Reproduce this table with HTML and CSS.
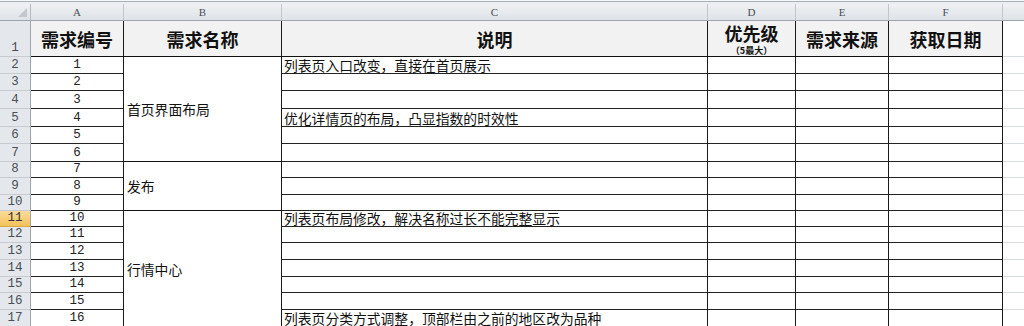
FILE: index.html
```html
<!DOCTYPE html>
<html lang="zh-CN">
<head>
<meta charset="utf-8">
<title>需求表</title>
<link rel="stylesheet" href="styles.css">
</head>
<body>
<div class="topbar"></div>
<div class="sheet">
  <div class="corner"><span class="tri"></span></div>
  <div class="ch">A</div>
  <div class="ch">B</div>
  <div class="ch">C</div>
  <div class="ch">D</div>
  <div class="ch">E</div>
  <div class="ch">F</div>
  <div class="ch last"></div>

  <div class="rh">1</div>
  <div class="t">需求编号</div>
  <div class="t">需求名称</div>
  <div class="t">说明</div>
  <div class="t two"><span class="big">优先级</span><span class="small">（5最大）</span></div>
  <div class="t">需求来源</div>
  <div class="t">获取日期</div>
  <div class="g"></div>

  <div class="rh">2</div><div class="n">1</div>
  <div class="m span6">首页界面布局</div>
  <div class="c">列表页入口改变，直接在首页展示</div><div class="e"></div><div class="e"></div><div class="e"></div><div class="g"></div>

  <div class="rh">3</div><div class="n">2</div>
  <div class="c"></div><div class="e"></div><div class="e"></div><div class="e"></div><div class="g"></div>

  <div class="rh">4</div><div class="n">3</div>
  <div class="c"></div><div class="e"></div><div class="e"></div><div class="e"></div><div class="g"></div>

  <div class="rh">5</div><div class="n">4</div>
  <div class="c">优化详情页的布局，凸显指数的时效性</div><div class="e"></div><div class="e"></div><div class="e"></div><div class="g"></div>

  <div class="rh">6</div><div class="n">5</div>
  <div class="c"></div><div class="e"></div><div class="e"></div><div class="e"></div><div class="g"></div>

  <div class="rh">7</div><div class="n">6</div>
  <div class="c"></div><div class="e"></div><div class="e"></div><div class="e"></div><div class="g"></div>

  <div class="rh">8</div><div class="n">7</div>
  <div class="m span3">发布</div>
  <div class="c"></div><div class="e"></div><div class="e"></div><div class="e"></div><div class="g"></div>

  <div class="rh">9</div><div class="n">8</div>
  <div class="c"></div><div class="e"></div><div class="e"></div><div class="e"></div><div class="g"></div>

  <div class="rh">10</div><div class="n">9</div>
  <div class="c"></div><div class="e"></div><div class="e"></div><div class="e"></div><div class="g"></div>

  <div class="rh sel">11</div><div class="n">10</div>
  <div class="m span7">行情中心</div>
  <div class="c">列表页布局修改，解决名称过长不能完整显示</div><div class="e"></div><div class="e"></div><div class="e"></div><div class="g"></div>

  <div class="rh">12</div><div class="n">11</div>
  <div class="c"></div><div class="e"></div><div class="e"></div><div class="e"></div><div class="g"></div>

  <div class="rh">13</div><div class="n">12</div>
  <div class="c"></div><div class="e"></div><div class="e"></div><div class="e"></div><div class="g"></div>

  <div class="rh">14</div><div class="n">13</div>
  <div class="c"></div><div class="e"></div><div class="e"></div><div class="e"></div><div class="g"></div>

  <div class="rh">15</div><div class="n">14</div>
  <div class="c"></div><div class="e"></div><div class="e"></div><div class="e"></div><div class="g"></div>

  <div class="rh">16</div><div class="n">15</div>
  <div class="c"></div><div class="e"></div><div class="e"></div><div class="e"></div><div class="g"></div>

  <div class="rh">17</div><div class="n">16</div>
  <div class="c">列表页分类方式调整，顶部栏由之前的地区改为品种</div><div class="e"></div><div class="e"></div><div class="e"></div><div class="g"></div>
</div>
</body>
</html>
```

FILE: styles.css
```css
html, body {
  margin: 0;
  padding: 0;
  background: #ffffff;
  overflow: hidden;
}
body {
  width: 1024px;
  height: 326px;
  font-family: "Noto Sans CJK SC", "Liberation Sans", sans-serif;
  color: #000;
}
.topbar {
  height: 4px;
  background: linear-gradient(#f7f8f9 0 1px, #a9b0b8 1px 2px, #eceef1 2px 4px);
}
.sheet {
  display: grid;
  grid-template-columns: 31px 93px 158px 426px 88px 93px 114px 1fr;
  grid-template-rows: 17px 36px 17px 17px 18px 18px 17px 18px 16px 17px 16px 16px 16px 17px 17px 16px 17px 17px;
}
.sheet > div {
  box-sizing: border-box;
  min-width: 0;
  overflow: hidden;
}
.corner {
  position: relative;
  background: linear-gradient(#eef0f3, #dfe3e8);
  border-right: 1px solid #b7bcc3;
  border-bottom: 1px solid #9da4ad;
}
.tri {
  position: absolute;
  right: 3px;
  bottom: 3px;
  width: 0;
  height: 0;
  border-left: 9px solid transparent;
  border-bottom: 9px solid #c4c8ce;
}
.ch {
  background: linear-gradient(#eef0f3, #dfe3e8);
  border-right: 1px solid #c2c6cc;
  border-bottom: 1px solid #9da4ad;
  font-family: "Liberation Serif", "DejaVu Serif", serif;
  font-size: 11px;
  color: #4a4f57;
  text-align: center;
  line-height: 17px;
}
.ch.last {
  border-right: none;
}
.rh {
  background: #e4e7ec;
  border-right: 1px solid #9da4ad;
  border-bottom: 1px solid #c7cbd1;
  font-family: "Liberation Mono", "DejaVu Sans Mono", monospace;
  font-size: 12.5px;
  color: #4a4f57;
  display: flex;
  align-items: flex-end;
  justify-content: center;
  line-height: 15px;
}
.rh.sel {
  background: linear-gradient(#fbdc9c, #f2c25a);
  color: #333;
  border-bottom-color: #d9a743;
}
.t {
  background: #f2f2f2;
  border-right: 1px solid #1a1a1a;
  border-bottom: 1px solid #111;
  font-weight: 700;
  font-size: 18px;
  display: flex;
  align-items: center;
  justify-content: center;
  line-height: 20px;
  color: #111;
}
.t.two {
  flex-direction: column;
  justify-content: flex-start;
  padding-top: 3px;
}
.big {
  font-size: 18px;
  line-height: 19px;
}
.small {
  font-size: 9px;
  line-height: 10px;
  margin-top: 3px;
}
.n {
  border-right: 1px solid #1a1a1a;
  border-bottom: 1px solid #222;
  font-family: "Liberation Mono", "DejaVu Sans Mono", monospace;
  font-size: 12.5px;
  color: #222;
  display: flex;
  align-items: flex-end;
  justify-content: center;
  line-height: 15px;
}
.m {
  border-right: 1px solid #1a1a1a;
  border-bottom: 1px solid #111;
  font-size: 13.8px;
  line-height: 16px;
  display: flex;
  align-items: center;
  padding-left: 3px;
  color: #111;
}
.span6 { grid-row: span 6; }
.span3 { grid-row: span 3; }
.span7 { grid-row: span 7; }
.sheet > .c {
  border-right: 1px solid #1a1a1a;
  border-bottom: 1px solid #222;
  font-size: 13.8px;
  line-height: 16px;
  display: flex;
  align-items: flex-end;
  padding-left: 2px;
  white-space: nowrap;
  color: #111;
  overflow: visible;
}
.e {
  border-right: 1px solid #1a1a1a;
  border-bottom: 1px solid #222;
}
.g {
  border-bottom: 1px solid #d8dbe0;
}
```
